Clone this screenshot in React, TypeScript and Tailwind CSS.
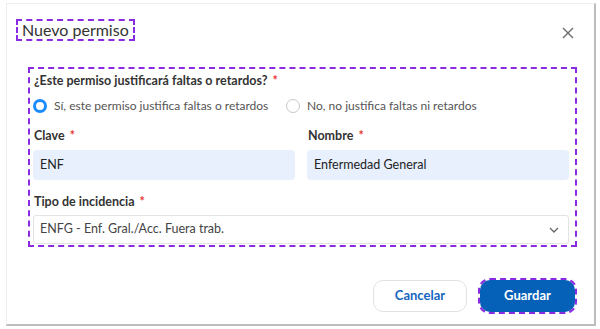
import React from "react";

export default function App() {
  const font = { fontFamily: 'Lato, "Noto Sans", sans-serif' };
  return (
    <div className="w-[600px] h-[329px] bg-white overflow-hidden" style={font}>
      <div className="ml-[6px] mt-[3px] w-[590px] h-[323px] bg-white border-l border-t border-[#ededed] border-r-2 border-b-2 border-r-[#bdbdbd] border-b-[#bdbdbd] flex flex-col">
        {/* Header */}
        <div className="flex items-start justify-between pl-[11px] pr-[20px] pt-[17px]">
          <div className="outline-2 outline-dashed outline-[#8a2be2] px-[4px] h-[18px] flex items-center">
            <span className="text-[16px] leading-none text-[#333]">Nuevo permiso</span>
          </div>
          <svg width="12" height="12" viewBox="0 0 12 12" className="mt-[6px]">
            <path d="M1 1 L11 11 M11 1 L1 11" stroke="#6b6b6b" strokeWidth="1.4" />
          </svg>
        </div>

        {/* Form group */}
        <div className="ml-[23px] mt-[30px] w-[545px] h-[176px] outline-2 outline-dashed outline-[#8a2be2] pl-[3px] pr-[6px] pt-[3px] flex flex-col">
          <div className="text-[12.5px] font-bold text-[#333] leading-[18px] pl-[1px]">
            ¿Este permiso justificará faltas o retardos? <span className="text-[#e53935] ml-[2px]">*</span>
          </div>
          <div className="flex items-center mt-[6px] h-[20px] text-[12px] text-[#555] whitespace-nowrap">
            <div className="flex items-center w-[253px]">
              <span className="w-[14px] h-[14px] rounded-full border-[3px] border-[#1a8cff] bg-white mr-[7px] shrink-0" />
              <span>Sí, este permiso justifica faltas o retardos</span>
            </div>
            <div className="flex items-center">
              <span className="w-[14px] h-[14px] rounded-full border border-[#c8c8c8] bg-white mr-[7px] shrink-0" />
              <span>No, no justifica faltas ni retardos</span>
            </div>
          </div>
          <div className="grid grid-cols-2 gap-x-[12px] mt-[11px]">
            <div className="flex flex-col">
              <div className="text-[12.5px] font-bold text-[#333] leading-[18px] pl-[1px]">
                Clave <span className="text-[#e53935] ml-[2px]">*</span>
              </div>
              <div className="mt-[5px] h-[30px] rounded-[4px] bg-[#e8f0fe] flex items-center px-[7px] text-[12.5px] text-[#222]">
                ENF
              </div>
            </div>
            <div className="flex flex-col">
              <div className="text-[12.5px] font-bold text-[#333] leading-[18px] pl-[1px]">
                Nombre <span className="text-[#e53935] ml-[2px]">*</span>
              </div>
              <div className="mt-[5px] h-[30px] rounded-[4px] bg-[#e8f0fe] flex items-center px-[7px] text-[12.5px] text-[#222]">
                Enfermedad General
              </div>
            </div>
          </div>
          <div className="text-[12.5px] font-bold text-[#333] leading-[18px] mt-[13px] pl-[1px]">
            Tipo de incidencia <span className="text-[#e53935] ml-[2px]">*</span>
          </div>
          <div className="mt-[4px] h-[29px] rounded-[3px] border border-[#e3e3e3] bg-white flex items-center justify-between pl-[6px] pr-[9px] text-[12.5px] text-[#444]">
            <span>ENFG - Enf. Gral./Acc. Fuera trab.</span>
            <svg width="10" height="6" viewBox="0 0 10 6">
              <path d="M1 1 L5 5 L9 1" stroke="#666" strokeWidth="1.3" fill="none" />
            </svg>
          </div>
        </div>

        {/* Footer */}
        <div className="flex justify-end items-center gap-[13px] pr-[19px] mt-[35px]">
          <button className="w-[94px] h-[32px] rounded-[10px] border border-[#e2e2e2] bg-white text-[13px] font-bold text-[#1565c0]">
            Cancelar
          </button>
          <button className="w-[95px] h-[32px] rounded-[10px] bg-[#0560b8] text-[13px] font-bold text-white outline-2 outline-dashed outline-[#8a2be2] outline-offset-[0px]">
            Guardar
          </button>
        </div>
      </div>
    </div>
  );
}
